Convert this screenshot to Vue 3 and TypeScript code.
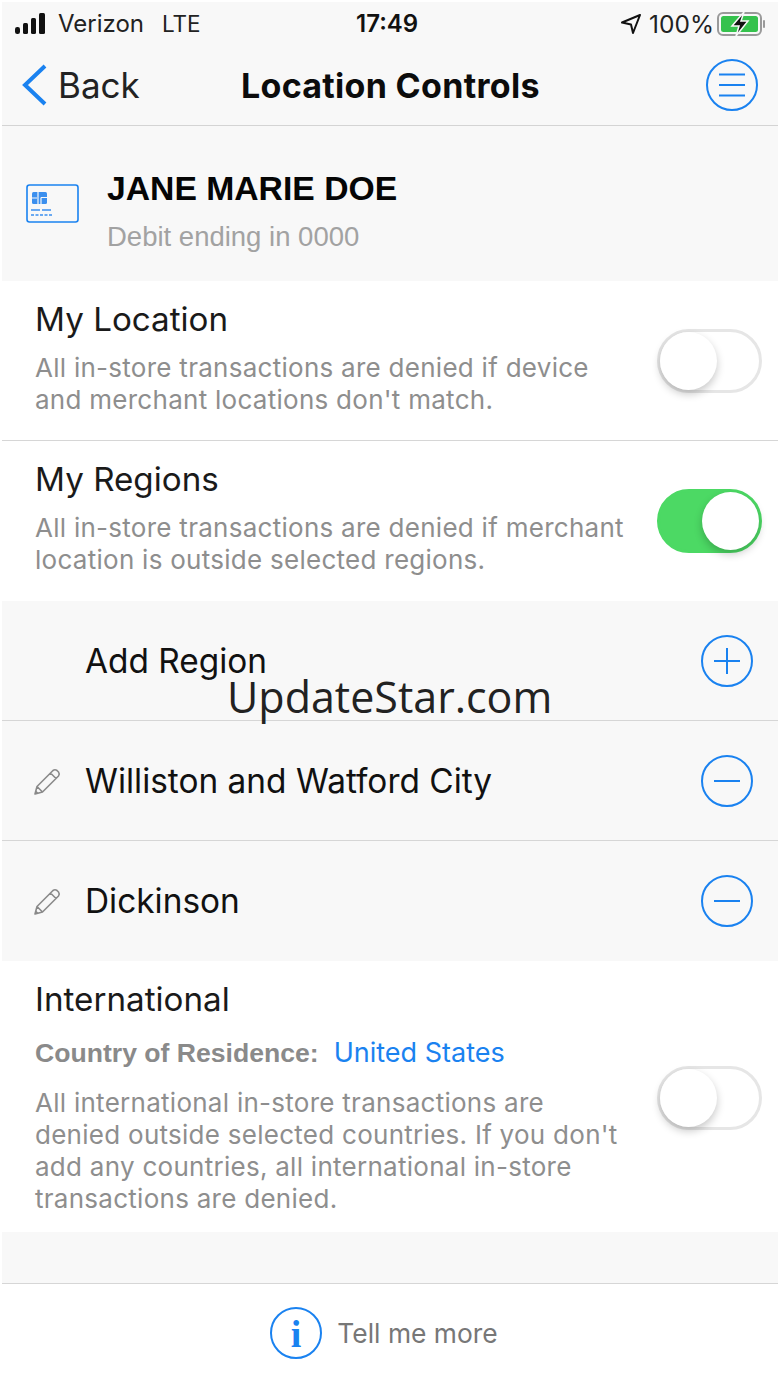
<script setup lang="ts">
interface RegionRow { name: string; icon: 'plus' | 'minus'; editable: boolean }
const regions: RegionRow[] = [
  { name: 'Add Region', icon: 'plus', editable: false },
  { name: 'Williston and Watford City', icon: 'minus', editable: true },
  { name: 'Dickinson', icon: 'minus', editable: true },
]
</script>

<template>
  <div class="screen">
    <header class="top">
      <div class="status">
        <div class="status-left">
          <svg class="signal" width="34" height="22" viewBox="0 0 34 22">
            <rect x="0" y="14" width="5" height="7" rx="2.2" fill="#111" />
            <rect x="8" y="10" width="5" height="11" rx="1.5" fill="#111" />
            <rect x="16" y="5" width="5" height="16" rx="1.5" fill="#111" />
            <rect x="24" y="0" width="6" height="21" rx="1.5" fill="#111" />
          </svg>
          <span class="carrier">Verizon</span>
          <span class="lte">LTE</span>
        </div>
        <div class="time">17:49</div>
        <div class="status-right">
          <svg width="22" height="22" viewBox="0 0 22 22" class="arrow">
            <path d="M20 2 L2 9.5 L11 11.5 L13 20 Z" fill="none" stroke="#111" stroke-width="2" stroke-linejoin="round" />
          </svg>
          <span class="pct">100%</span>
          <svg width="50" height="26" viewBox="0 0 50 26">
            <rect x="1" y="2" width="43" height="22" rx="5" fill="none" stroke="#9a9a9a" stroke-width="2" />
            <rect x="4" y="5" width="37" height="16" rx="2.5" fill="#35c24d" />
            <rect x="46" y="9" width="2" height="8" rx="1" fill="#9a9a9a" />
            <path d="M27 1 L15 15 L22 15 L19 25 L31 10 L24 10 Z" fill="#111" stroke="#f8f8f8" stroke-width="1.5" />
          </svg>
        </div>
      </div>
      <nav class="nav">
        <div class="back">
          <svg width="26" height="44" viewBox="0 0 26 44">
            <path d="M23 3 L3 22 L23 41" fill="none" stroke="#1a82f0" stroke-width="4" />
          </svg>
          <span>Back</span>
        </div>
        <h1 class="title">Location Controls</h1>
        <svg class="menu" width="54" height="54" viewBox="0 0 54 54">
          <circle cx="27" cy="27" r="25" fill="none" stroke="#1a82f0" stroke-width="2" />
          <path d="M14 16.5 H40 M14 27 H40 M14 37.5 H40" stroke="#1a82f0" stroke-width="2" />
        </svg>
      </nav>
    </header>

    <section class="card">
      <svg class="card-icon" width="54" height="40" viewBox="0 0 54 40">
        <rect x="1" y="1" width="51" height="37" rx="2.5" fill="none" stroke="#1a82f0" stroke-width="1.6" />
        <rect x="6" y="8" width="15" height="12" rx="1.5" fill="#3b8fee" />
        <path d="M12 8 V20 M6 14 H11 M15 13.5 H21 M15 13.5 V20" stroke="#f8f8f8" stroke-width="1.2" fill="none" />
        <path d="M5 26 H26" stroke="#3b8fee" stroke-width="1.5" stroke-dasharray="9 2" />
        <path d="M5 31 H26" stroke="#3b8fee" stroke-width="1.5" stroke-dasharray="3 1.5" />
      </svg>
      <div class="card-text">
        <div class="holder">JANE MARIE DOE</div>
        <div class="ending">Debit ending in 0000</div>
      </div>
    </section>

    <section class="setting line">
      <div class="setting-text">
        <h2>My Location</h2>
        <p>All in-store transactions are denied if device and merchant locations don't match.</p>
      </div>
      <div class="switch"><span class="knob"></span></div>
    </section>

    <section class="setting">
      <div class="setting-text">
        <h2>My Regions</h2>
        <p>All in-store transactions are denied if merchant location is outside selected regions.</p>
      </div>
      <div class="switch on"><span class="knob"></span></div>
    </section>

    <section class="regions">
      <div class="rows">
        <div v-for="r in regions" :key="r.name" class="region">
          <svg v-if="r.editable" class="pencil" width="28" height="28" viewBox="0 0 28 28">
            <path d="M2 26 L4 18.5 L20 2.5 Q22 1 24 2.5 L25.5 4 Q27 6 25.5 8 L9.5 24 Z M4 18.5 L9.5 24 M17.5 5 L23 10.5" fill="none" stroke="#8a8a8a" stroke-width="1.6" stroke-linejoin="round" />
            <path d="M2 26 L3 22.5 L5.5 25 Z" fill="#8a8a8a" />
          </svg>
          <span class="region-name">{{ r.name }}</span>
          <svg class="round" width="54" height="54" viewBox="0 0 54 54">
            <circle cx="27" cy="27" r="25" fill="none" stroke="#1a82f0" stroke-width="2" />
            <path d="M14 27 H40" stroke="#1a82f0" stroke-width="2" />
            <path v-if="r.icon === 'plus'" d="M27 14 V40" stroke="#1a82f0" stroke-width="2" />
          </svg>
        </div>
      </div>
      <div class="watermark">UpdateStar.com</div>
    </section>

    <section class="setting intl">
      <div class="setting-text">
        <h2>International</h2>
        <div class="residence"><b>Country of Residence:</b><a>United States</a></div>
        <p>All international in-store transactions are denied outside selected countries. If you don't add any countries, all international in-store transactions are denied.</p>
      </div>
      <div class="switch"><span class="knob"></span></div>
    </section>

    <div class="spacer"></div>

    <footer class="foot">
      <svg width="54" height="54" viewBox="0 0 54 54">
        <circle cx="27" cy="27" r="25" fill="none" stroke="#1a82f0" stroke-width="2" />
        <text x="27" y="41" text-anchor="middle" class="i">i</text>
      </svg>
      <span>Tell me more</span>
    </footer>
  </div>
</template>

<style>
html, body { margin: 0; background: #fff; }
</style>

<style scoped>
.screen {
  width: 780px;
  height: 1387px;
  overflow: hidden;
  background: #fff;
  padding: 2px 2px 0 2px;
  box-sizing: border-box;
  font-family: Inter, "Liberation Sans", sans-serif;
  color: #111;
}
.top {
  height: 123px;
  background: #f8f8f8;
  border-bottom: 1px solid #d4d4d4;
  box-sizing: content-box;
  display: flex;
  flex-direction: column;
}
.status {
  height: 43px;
  display: flex;
  align-items: center;
  justify-content: space-between;
  padding: 0 11px 0 13px;
  position: relative;
  font-size: 24px;
  color: #222;
}
.status-left, .status-right { display: flex; align-items: center; }
.signal { margin-right: 9px; }
.lte { margin-left: 18px; font-size: 22.5px; }
.time {
  position: absolute;
  left: 354px;
  font-weight: 600;
  font-size: 24px;
  color: #111;
}
.arrow { margin-right: 7px; margin-left: -9px; }
.pct { margin-right: 3px; font-size: 24.5px; }
.nav {
  flex: 1;
  display: flex;
  align-items: center;
  justify-content: space-between;
  padding: 0 19px 0 20px;
  position: relative;
}
.back { display: flex; align-items: center; gap: 10px; font-size: 35px; color: #222; }
.title {
  position: absolute;
  left: 239px;
  margin: 0;
  font-size: 34px;
  font-weight: 700;
  letter-spacing: 0.3px;
  color: #0c0c0c;
}
.card {
  height: 155px;
  background: #f8f8f8;
  display: flex;
  align-items: center;
  padding-left: 24px;
  gap: 27px;
}
.card-icon { margin-top: 1px; }
.card-text { padding-top: 14px; }
.holder {
  font-family: "Liberation Sans", Arial, sans-serif;
  font-size: 33.7px;
  font-weight: 700;
  color: #050505;
  line-height: 40px;
}
.ending {
  font-family: "Liberation Sans", Arial, sans-serif;
  font-size: 27.5px;
  color: #a2a2a2;
  margin-top: 13px;
  line-height: 32px;
}
.setting {
  height: 160px;
  box-sizing: border-box;
  background: #fff;
  display: flex;
  justify-content: space-between;
  padding: 15px 16px 0 33px;
}
.setting.line { border-bottom: 1px solid #d6d6d6; }
.setting-text { width: 595px; }
h2 {
  margin: 0;
  font-size: 33.2px;
  font-weight: 400;
  line-height: 46px;
  color: #1a1a1a;
}
p {
  margin: 10px 0 0;
  font-size: 26px;
  letter-spacing: 0.27px;
  line-height: 32px;
  color: #8e8e8e;
}
.switch {
  position: relative;
  width: 105px;
  height: 64px;
  box-sizing: border-box;
  border-radius: 32px;
  border: 3px solid #e6e6e6;
  background: #fff;
  margin-top: 33px;
  flex: none;
}
.switch.on { background: #4cd964; border-color: #4cd964; }
.knob {
  position: absolute;
  left: 0;
  top: 0;
  width: 57px;
  height: 58px;
  border-radius: 50%;
  background: #fff;
  box-shadow: 0 4px 8px rgba(0, 0, 0, 0.22);
}
.switch.on .knob { left: 42px; }
.regions { position: relative; background: #f8f8f8; }
.region {
  height: 120px;
  box-sizing: border-box;
  display: flex;
  align-items: center;
  padding: 0 24px 0 31px;
  border-bottom: 1px solid #d6d6d6;
  position: relative;
}
.region:last-child { border-bottom: none; }
.region-name {
  position: absolute;
  left: 83px;
  font-size: 33.4px;
  color: #111;
}
.pencil { margin-top: 2px; }
.round { margin-left: auto; }
.watermark {
  position: absolute;
  left: 225px;
  top: 66px;
  font-family: "Open Sans", sans-serif;
  font-size: 43px;
  color: #222;
  line-height: 60px;
}
.intl { height: 271px; }
.intl .switch { margin-top: 90px; }
.residence { margin-top: 13px; font-size: 26px; line-height: 36px; display: flex; gap: 15px; }
.residence b {
  font-family: "Liberation Sans", Arial, sans-serif;
  font-weight: 700;
  font-size: 26.6px;
  color: #8a8a8a;
}
.residence a { color: #1a82f0; font-size: 27px; }
.intl p { margin-top: 16px; }
.spacer { height: 51px; background: #f8f8f8; border-bottom: 1px solid #d6d6d6; }
.foot {
  height: 103px;
  display: flex;
  align-items: center;
  justify-content: center;
  gap: 14px;
  font-size: 26.4px;
  color: #777;
  padding: 0 13px 5px 0;
  box-sizing: border-box;
}
.i {
  font-family: "Liberation Serif", serif;
  font-weight: 700;
  font-size: 38px;
  fill: #1a82f0;
}
</style>
